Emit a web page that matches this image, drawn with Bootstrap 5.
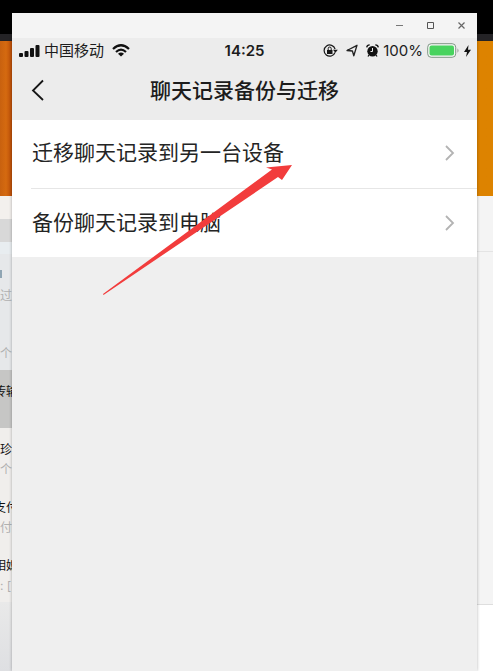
<!DOCTYPE html>
<html lang="zh-CN">
<head>
<meta charset="utf-8">
<meta name="viewport" content="width=device-width, initial-scale=1">
<title>聊天记录备份与迁移</title>
<link href="https://cdn.jsdelivr.net/npm/bootstrap@5.3.0/dist/css/bootstrap.min.css" rel="stylesheet">
<style>
body{font-family:Inter,"Noto Sans CJK SC",sans-serif;background:#f3f3f3;color:#1c1c1c}
svg{display:block;flex:none}
.desktop{z-index:0}
.strip{height:41px;background:#000;border-bottom:7px solid #242326}
.banner{height:155px;background:linear-gradient(90deg,#c8610f 0,#d56a10 6px,#b94d08 12px,#dc8200 13px,#dd8300)}
.chats{width:18px;background:#e6e8ea;font-size:12px;line-height:20px}
.chats-head{height:58px;background:linear-gradient(#f3f0ed 23px,#d8d8d8 23px,#d8d8d8 46px,#e8edf0 46px)}
.chat{height:58px;padding-top:12px;white-space:nowrap;overflow:hidden;color:#111}
.chat div{height:20px}
.chat .tail{display:flex;justify-content:flex-end}
.chat .preview{color:#b0b0b0}
.chat .marker{width:2px;height:8px;margin:4px 0 8px;background:#8fa5b3}
.chat.selected{background:#c6c6c5}
.chat.warm{background:#f0eeec}
.chats-end{background:linear-gradient(#e9e9e9,#dedfe2)}
.side{width:16px;background:#f4f4f4}
.side-head{height:56px;border-bottom:1px solid #e4e4e4}
.side-foot{height:67px;background:#fff;border-top:1px solid #dedede}
.phone{z-index:1;margin:13px 16px 0 12px;background:#efefef;box-shadow:0 0 3px rgba(0,0,0,.3)}
.titlebar{height:25px;background:#f4f4f4}
.titlebar button,.back{border:0;background:none;padding:0}
.titlebar button{width:31px;height:25px}
.head{background:#ececec}
.status{height:25px;font-size:15px;line-height:25px;padding:0 6px 0 7px}
.status .clock{font-weight:600}
.navrow{height:57px;padding-bottom:2px}
.navrow h1{font-size:21px;line-height:32px;font-weight:500}
.back{left:18px;top:15px}
.menu-row{height:68px;padding:0 22px 2px 20px;background:#fff;color:#242424;font-size:21px;line-height:32px;text-decoration:none}
.menu-row:last-child{padding-bottom:0}
.divider{border-top:1px solid #e6e6e6;margin-left:19px}
.arrow{left:90px;top:150px}
</style>
<script src="https://cdn.jsdelivr.net/npm/bootstrap@5.3.0/dist/js/bootstrap.bundle.min.js"></script>
</head>
<body>
<div class="position-relative vh-100 overflow-hidden d-flex flex-column">
  <div class="desktop position-absolute top-0 start-0 w-100 h-100 d-flex flex-column">
    <div class="strip"></div>
    <div class="banner"></div>
    <div class="d-flex flex-fill justify-content-between">
      <div class="chats d-flex flex-column">
        <div class="chats-head"></div>
        <div class="chat"><div class="marker"></div><div class="preview">过</div></div>
        <div class="chat"><div></div><div class="preview">个</div></div>
        <div class="chat selected"><div class="tail">传输</div></div>
        <div class="chat warm"><div>珍</div><div class="preview">个</div></div>
        <div class="chat warm"><div class="tail">支付</div><div class="preview">付</div></div>
        <div class="chat warm"><div class="tail">相媳</div><div class="preview">: [</div></div>
        <div class="chats-end flex-fill"></div>
      </div>
      <div class="side d-flex flex-column">
        <div class="side-head"></div>
        <div class="flex-fill"></div>
        <div class="side-foot"></div>
      </div>
    </div>
  </div>

  <main class="phone position-relative flex-fill">
    <div class="titlebar d-flex justify-content-end">
      <button type="button" aria-label="最小化"><svg class="mx-auto" width="9" height="9" viewBox="0 0 9 9"><path d="M1 4.5h7" stroke="#777"/></svg></button>
      <button type="button" aria-label="最大化"><svg class="mx-auto" width="9" height="9" viewBox="0 0 9 9"><path d="M1.5 1.5h6v6h-6z" fill="none" stroke="#555"/></svg></button>
      <button type="button" aria-label="关闭"><svg class="mx-auto" width="9" height="9" viewBox="0 0 9 9"><path d="M1.5 1.5l6 6m0-6l-6 6" stroke="#666" stroke-width="1.2"/></svg></button>
    </div>
    <header class="head">
      <div class="status position-relative d-flex align-items-center">
        <svg width="21" height="12" viewBox="0 0 21 12" fill="#111"><rect y="8" width="4" height="4" rx="1"/><rect x="5.5" y="6" width="4" height="6" rx="1"/><rect x="11" y="3" width="4" height="9" rx="1"/><rect x="16.5" width="4" height="12" rx="1"/></svg>
        <span class="ms-1 me-2">中国移动</span>
        <svg width="18" height="13" viewBox="0 0 18 13" fill="none" stroke="#111" stroke-width="2.2"><path d="M1 5Q9-2.5 17 5M4 8Q9 3.4 14 8"/><path d="M9 12.6L6 9.8Q9 7.2 12 9.8Z" fill="#111" stroke="none"/></svg>
        <span class="clock position-absolute start-50 translate-middle-x">14:25</span>
        <div class="ms-auto d-flex align-items-center">
          <svg width="15" height="13" viewBox="0 0 15 13" fill="none" stroke="#171717"><path d="M12 8.5A5.6 5.6 0 1 1 12.1 5" stroke-width="1.2"/><path d="M10 5.8h4.8L12.4 8.7Z" fill="#171717" stroke="none"/><rect x="4" y="6" width="5.5" height="4" fill="#171717" stroke="none"/><path d="M5.2 6V4.5a1.5 1.5 0 0 1 3 0V6"/></svg>
          <svg class="ms-2" width="12" height="13" viewBox="0 0 12 13"><path d="M1 6.5L11 1.3 7.8 11.8 6.4 7Z" fill="none" stroke="#222" stroke-width="1.3" stroke-linejoin="round"/></svg>
          <svg class="ms-2" width="13" height="13" viewBox="0 0 13 13"><circle cx="6.500" cy="7.200" r="5.200" fill="#111"/><path d="M.7 3.300Q1 .8 3.700 .8M12.300 3.300Q12 .8 9.300 .8" fill="none" stroke="#111" stroke-width="1.300"/><path d="M3 11l-1 1.500M10 11l1 1.500" stroke="#111" stroke-width="1.300"/><path d="M6.500 4v3.500H4.500" fill="none" stroke="#eee"/></svg>
          <span class="ms-1">100%</span>
          <svg class="ms-1" width="33" height="15" viewBox="0 0 33 15"><rect x=".7" y=".7" width="28" height="13.6" rx="3.5" fill="#f5f7f5" stroke="#7f9684"/><rect x="2.5" y="2.5" width="24.5" height="10" rx="2" fill="#48d35e"/><path d="M30.5 5.2q2 2.3 0 4.6z" fill="#8b928c"/></svg>
          <svg class="ms-1" width="7" height="12" viewBox="0 0 7 12"><path d="M4.5 0L0 7h3L2 12l5-7.3H4z" fill="#111"/></svg>
        </div>
      </div>
      <div class="navrow position-relative d-flex align-items-center justify-content-center">
        <button class="back position-absolute" type="button" aria-label="返回"><svg width="15" height="24" viewBox="0 0 15 24"><path d="M13 2.5L3 12.5 13 22" fill="none" stroke="#161616" stroke-width="1.8"/></svg></button>
        <h1 class="m-0">聊天记录备份与迁移</h1>
      </div>
    </header>
    <nav class="bg-white">
      <a class="menu-row d-flex align-items-center justify-content-between" href="#device"><span>迁移聊天记录到另一台设备</span><svg width="11" height="18" viewBox="0 0 11 18"><path d="M2 2l7 7-7 7" fill="none" stroke="#b3b3b3" stroke-width="1.8"/></svg></a>
      <div class="divider"></div>
      <a class="menu-row d-flex align-items-center justify-content-between" href="#computer"><span>备份聊天记录到电脑</span><svg width="11" height="18" viewBox="0 0 11 18"><path d="M2 2l7 7-7 7" fill="none" stroke="#b3b3b3" stroke-width="1.8"/></svg></a>
    </nav>
    <svg class="arrow position-absolute" width="192" height="134" viewBox="0 0 192 134"><path d="M1 131L170 6.500 164 4.500 190 2 180 17 176 14 1.500 132Z" fill="#f23c3c"/></svg>
  </main>
</div>
</body>
</html>
